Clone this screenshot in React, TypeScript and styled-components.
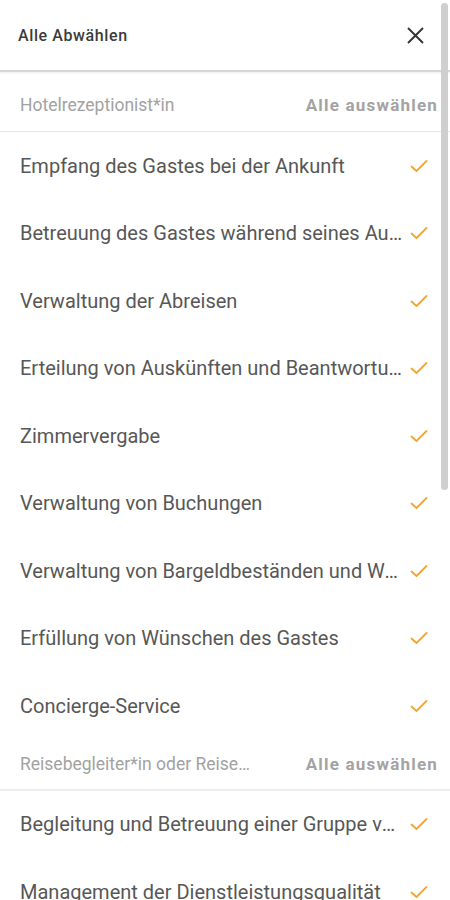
import React from 'react';
import styled, { createGlobalStyle } from 'styled-components';

type Section = { title: string; items: string[] };

const sections: Section[] = [
  {
    title: 'Hotelrezeptionist*in',
    items: [
      'Empfang des Gastes bei der Ankunft',
      'Betreuung des Gastes während seines Aufenthalts',
      'Verwaltung der Abreisen',
      'Erteilung von Auskünften und Beantwortung von Fragen',
      'Zimmervergabe',
      'Verwaltung von Buchungen',
      'Verwaltung von Bargeldbeständen und Wechselgeld',
      'Erfüllung von Wünschen des Gastes',
      'Concierge-Service',
    ],
  },
  {
    title: 'Reisebegleiter*in oder Reiseleiter*in',
    items: [
      'Begleitung und Betreuung einer Gruppe von Reisenden',
      'Management der Dienstleistungsqualität',
    ],
  },
];

export default function App() {
  return (
    <>
      <GlobalStyle />
      <Screen>
        <Header>
          <HeaderTitle>Alle Abwählen</HeaderTitle>
          <CloseButton aria-label="Schließen">
            <svg width="17" height="17" viewBox="0 0 17 17">
              <path d="M1 1 L16 16 M16 1 L1 16" stroke="#333" strokeWidth="1.9" />
            </svg>
          </CloseButton>
        </Header>
        {sections.map((section, i) => (
          <div key={section.title}>
            <SectionHeader $first={i === 0}>
              <SectionTitle>{section.title}</SectionTitle>
              <SelectAll>Alle auswählen</SelectAll>
            </SectionHeader>
            {section.items.map((item) => (
              <Row key={item}>
                <RowLabel>{item}</RowLabel>
                <Check />
              </Row>
            ))}
          </div>
        ))}
        <ScrollThumb />
      </Screen>
    </>
  );
}

function Check() {
  return (
    <CheckBox>
      <svg width="18" height="14" viewBox="0 0 18 14">
        <path d="M1.5 7.5 L6.5 12 L16.5 2" fill="none" stroke="#f2a531" strokeWidth="1.8" strokeLinecap="round" strokeLinejoin="round" />
      </svg>
    </CheckBox>
  );
}

const GlobalStyle = createGlobalStyle`
  html, body {
    margin: 0;
    padding: 0;
    background: #fff;
    font-family: Roboto, "Liberation Sans", sans-serif;
    overflow: hidden;
  }
`;

const Screen = styled.div`
  position: relative;
  width: 450px;
  height: 900px;
  overflow: hidden;
  background: #fff;
`;

const Header = styled.div`
  display: flex;
  align-items: center;
  justify-content: space-between;
  height: 70px;
  padding: 0 26px 0 18px;
  border-bottom: 2px solid #d6d6d6;
  box-shadow: 0 1px 2px rgba(0, 0, 0, 0.08);
`;

const HeaderTitle = styled.div`
  font-size: 16px;
  font-weight: 500;
  letter-spacing: 0.6px;
  color: #3b3b3b;
`;

const CloseButton = styled.div`
  display: flex;
  width: 17px;
  height: 17px;
`;

const SectionHeader = styled.div<{ $first: boolean }>`
  display: flex;
  align-items: center;
  justify-content: space-between;
  gap: 54px;
  box-sizing: border-box;
  height: ${(p) => (p.$first ? '60px' : '51px')};
  padding: ${(p) => (p.$first ? '6px' : '0')} 12px 0 20px;
  border-bottom: ${(p) => (p.$first ? '1px solid #e6e6e6' : '2px solid #ececec')};
`;

const SectionTitle = styled.div`
  font-size: 17.5px;
  color: #a2a2a2;
  white-space: nowrap;
  overflow: hidden;
  text-overflow: ellipsis;
  min-width: 0;
`;

const SelectAll = styled.div`
  flex: none;
  font-size: 17px;
  font-weight: 700;
  letter-spacing: 1.2px;
  color: #a3a3a3;
`;

const Row = styled.div`
  display: flex;
  align-items: center;
  height: 67.5px;
  padding: 0 22px 0 20px;
`;

const RowLabel = styled.div`
  flex: 1;
  min-width: 0;
  font-size: 20px;
  color: #575757;
  white-space: nowrap;
  overflow: hidden;
  text-overflow: ellipsis;
`;

const CheckBox = styled.div`
  flex: none;
  display: flex;
  justify-content: flex-end;
  width: 22px;
`;

const ScrollThumb = styled.div`
  position: absolute;
  top: 3px;
  right: 2px;
  width: 7px;
  height: 487px;
  border-radius: 4px;
  background: #cfcfcf;
`;
